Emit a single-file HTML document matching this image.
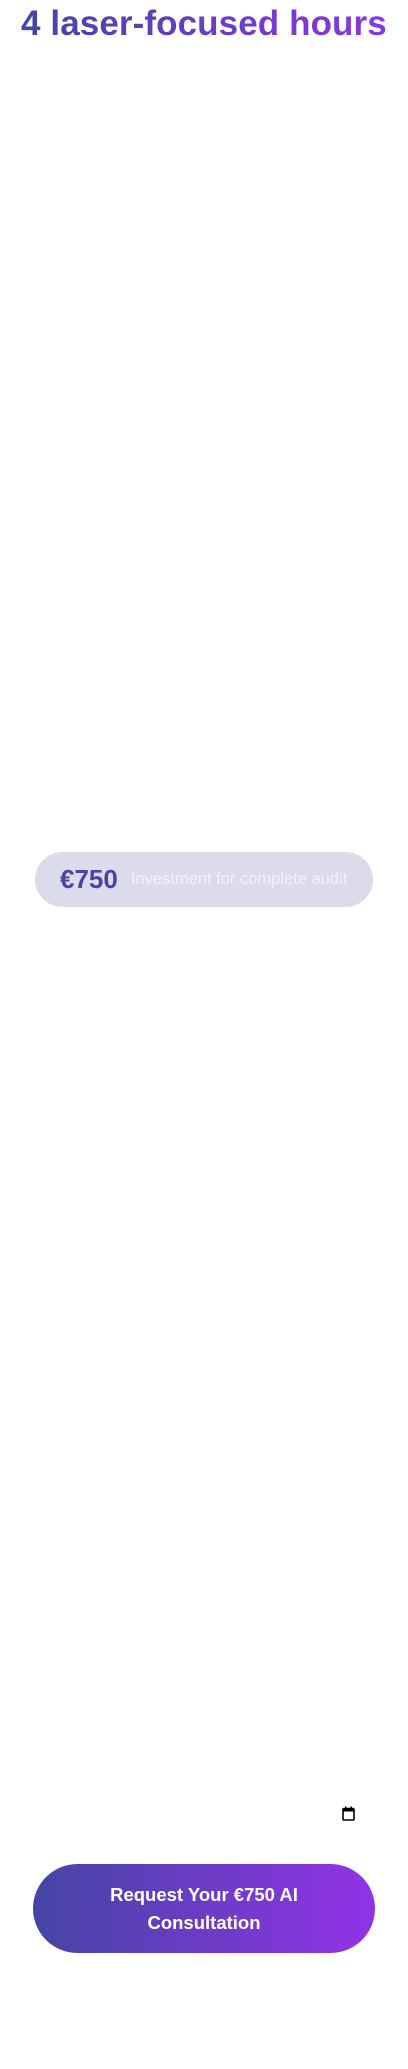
<!DOCTYPE html>
<html><head><meta charset="utf-8"><style>
body{margin:0;width:408px;height:2069px;background:#fff;font-family:"Liberation Sans",sans-serif;position:relative;overflow:hidden}
h1{position:absolute;left:21px;top:2px;margin:0;font-size:35px;font-weight:700;letter-spacing:0.1px;white-space:nowrap;background:linear-gradient(90deg,#4545a5,#8b36e0);-webkit-background-clip:text;background-clip:text;color:transparent;line-height:44px}
.pill{position:absolute;left:35px;top:852px;width:338px;height:55px;border-radius:28px;background:#dbdbec;display:flex;align-items:center}
.pill b{margin-left:25px;font-size:26px;color:#4545a5;font-weight:700}
.pill span{margin-left:13px;font-size:16.5px;color:#f2f0fa}
.cal{position:absolute;left:342px;top:1806px}
.btn{position:absolute;left:33px;top:1864px;width:342px;height:89px;border-radius:45px;background:linear-gradient(90deg,#4545a5,#9233e6);color:#fff;font-size:18.5px;font-weight:700;text-align:center;line-height:28px;display:flex;align-items:center;justify-content:center}
</style></head><body>
<h1>4 laser-focused hours</h1>
<div class="pill"><b>€750</b><span>Investment for complete audit</span></div>
<svg class="cal" width="13" height="15" viewBox="0 0 13 15"><rect x="1" y="2.5" width="11" height="11.5" rx="1" fill="none" stroke="#000" stroke-width="1.6"/><rect x="1" y="2.5" width="11" height="3" fill="#000"/><rect x="3" y="0.5" width="1.5" height="3" fill="#000"/><rect x="8.5" y="0.5" width="1.5" height="3" fill="#000"/></svg>
<div class="btn">Request Your €750 AI<br>Consultation</div>
</body></html>
